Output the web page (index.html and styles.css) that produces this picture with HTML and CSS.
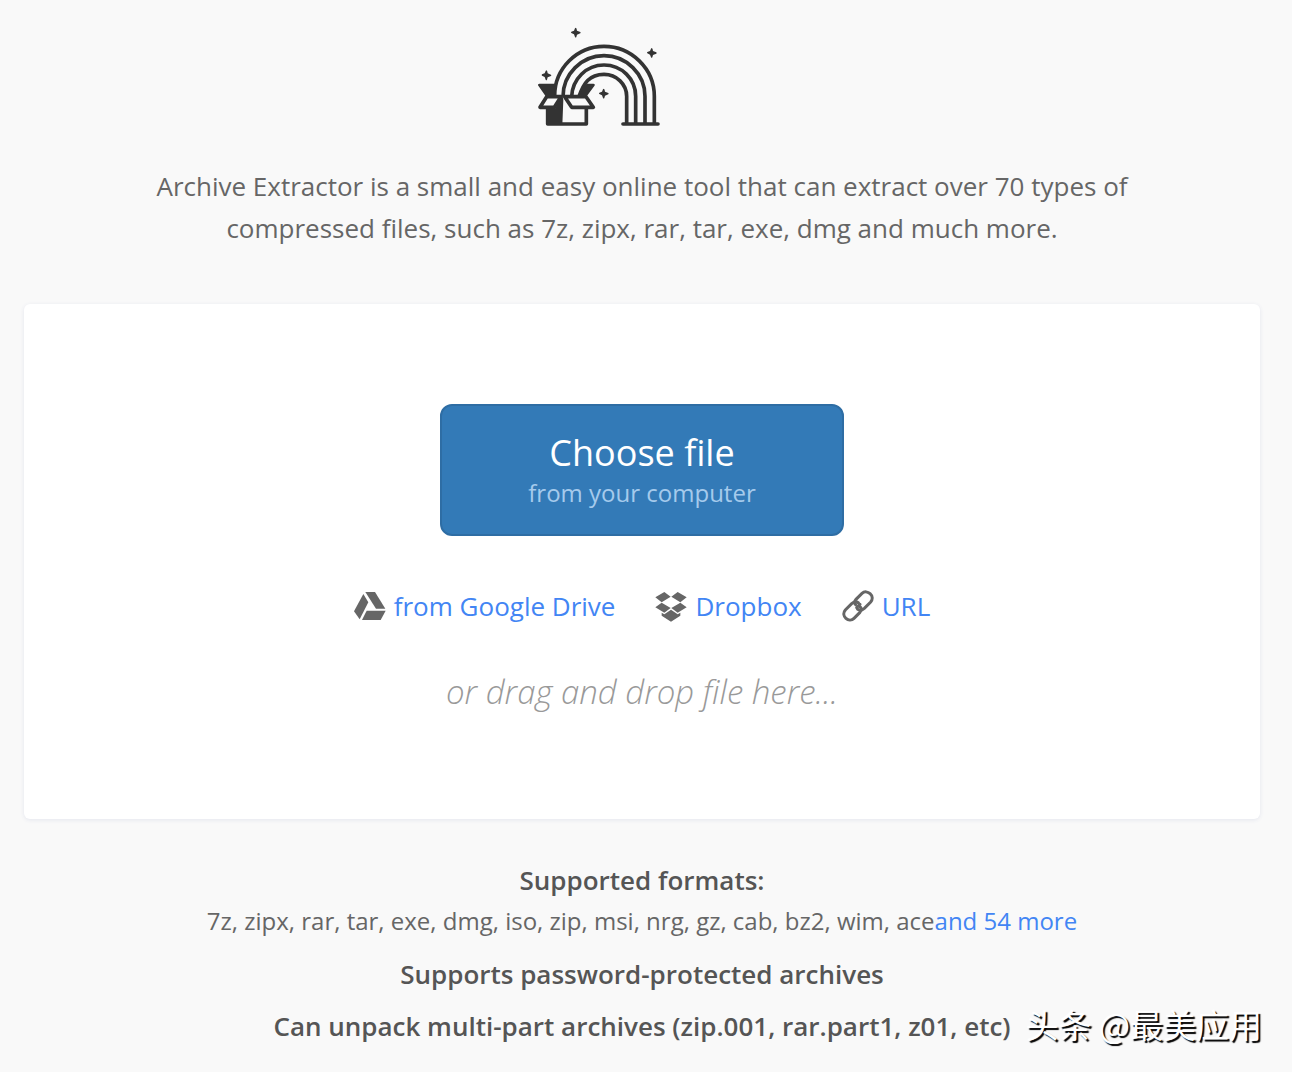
FILE: index.html
```html
<!DOCTYPE html>
<html lang="en">
<head>
<meta charset="utf-8">
<title>Archive Extractor</title>
<meta name="viewport" content="width=device-width, initial-scale=1">
<link rel="stylesheet" href="styles.css">
</head>
<body>
<header class="header">
  <svg class="logo" viewBox="0 0 480 375" role="img" aria-label="Archive Extractor">
    <g fill="none" stroke="#333" stroke-width="11">
      <path d="M104 242C104 160 171 94 252 94S403 160 403 244V327"/>
      <path d="M129 245C129 177 185 122 252 122S375 177 375 244V327"/>
      <path d="M155 245C157 192 199 150 252 150S347 192 347 244V327"/>
      <path d="M177 245C190 205 208 178 252 178C290 178 320 208 320 244V327"/>
      <path d="M309 327H414" stroke-linecap="round" stroke-width="11"/>
      <path d="M83 280V327H199V280" stroke-linejoin="round"/>
      <path d="M80 245H123L103 277H60ZM134 245H198L220 277H155Z" stroke-linejoin="round"/>
    </g>
    <g fill="#333">
      <path d="M58 206H105L102 245H78L54 211Q53 206 58 206ZM200 206H220Q227 207 223 213L199 245H176Q190 215 200 206Z"/>
      <path d="M122 250L128 245L130 254L127 330H80V280H106Z"/>
      <path id="spark" d="M167 38Q170 38 171 47L181 51Q183 53 181 55L171 59L169 66Q167 69 165 66L162 58L154 54Q152 52 154 50L162 47L165 40Q166 38 167 38Z"/>
      <use href="#spark" x="228" y="61"/>
      <use href="#spark" x="-88" y="128"/>
      <use href="#spark" x="84" y="183"/>
    </g>
  </svg>
</header>
<main class="content">
  <p class="intro">Archive Extractor is a small and easy online tool that can extract over 70 types of compressed files, such as 7z, zipx, rar, tar, exe, dmg and much more.</p>
  <section class="card">
    <button class="choose" type="button">
      <span class="choose-title">Choose file</span>
      <span class="choose-note">from your computer</span>
    </button>
    <nav class="sources" aria-label="Other sources">
      <a class="source" href="#drive"><svg class="icon" viewBox="0 0 96 96" aria-hidden="true"><g fill="#666"><path d="M28 12L43 37L17 88L0 64Z"/><path d="M34 6H63L94 56H66Z"/><path d="M38 62H95L80 90H24Z"/></g></svg>from Google Drive</a>
      <a class="source" href="#dropbox"><svg class="icon" viewBox="0 0 96 96" aria-hidden="true"><path fill="#666" d="M28 6L47 20L20 37L1 22ZM68 6L95 22L76 37L49 20ZM1 52L20 38L47 54L28 68ZM76 38L95 52L68 68L49 54ZM48 59L68 73L76 68V77L48 95L20 77V68L28 73Z"/></svg>Dropbox</a>
      <a class="source" href="#url"><svg class="icon" viewBox="0 0 96 96" aria-hidden="true"><g fill="none" stroke="#666" stroke-width="9" stroke-linecap="round"><path d="M41 44C36 39 37 34 42 28L60 10C75-4 101 18 86 36L67 55Q56 64 47 58"/><path d="M55 51C60 57 58 62 53 68L36 85C21 100-5 78 10 60L29 41Q40 32 49 38"/><path d="M44 53L54 43"/></g></svg>URL</a>
    </nav>
    <p class="drop">or drag and drop file here...</p>
  </section>
  <section class="details">
    <h2 class="feature">Supported formats:</h2>
    <p class="formats">7z, zipx, rar, tar, exe, dmg, iso, zip, msi, nrg, gz, cab, bz2, wim, ace<a href="#formats">and 54 more</a></p>
    <h2 class="feature">Supports password-protected archives</h2>
    <h2 class="feature">Can unpack multi-part archives (zip.001, rar.part1, z01, etc)</h2>
  </section>
</main>
<div class="watermark">头条 @最美应用</div>
</body>
</html>
```
FILE: styles.css
```css
* {
  box-sizing: border-box;
}

body {
  position: relative;
  margin: 0;
  padding: 15px 32px 16px 24px;
  background: #f9f9f9;
  color: #666;
  font-family: "Open Sans", "Noto Sans", sans-serif;
  font-size: 26px;
  line-height: 42px;
  text-align: center;
}

h2,
p {
  margin: 0;
}

a {
  color: #4285f4;
  text-decoration: none;
}

.header {
  display: flex;
  justify-content: center;
  padding-right: 84px;
}

.logo {
  width: 160px;
  height: 125px;
}

.intro {
  max-width: 1040px;
  margin: 25px auto 55px;
}

.card {
  display: flex;
  flex-direction: column;
  align-items: center;
  padding: 100px 24px 102px;
  background: #fff;
  border-radius: 6px;
  box-shadow: 0 1px 4px #e4e6ee;
}

.choose {
  display: flex;
  flex-direction: column;
  align-items: center;
  width: 404px;
  max-width: 100%;
  padding: 22px 16px 26px;
  border: 2px solid #2e6da4;
  border-radius: 12px;
  background: #337ab7;
  color: #fff;
  font: inherit;
  cursor: pointer;
}

.choose-title {
  font-size: 36px;
  line-height: 50px;
}

.choose-note {
  color: #a5caec;
  font-size: 24px;
  line-height: 30px;
}

.sources {
  display: flex;
  flex-wrap: wrap;
  justify-content: center;
  gap: 40px;
  margin-top: 49px;
}

.source {
  display: flex;
  align-items: center;
  gap: 8px;
}

.icon {
  width: 32px;
  height: 32px;
}

.drop {
  margin-top: 40px;
  color: #999;
  font-size: 33px;
  font-style: italic;
  font-weight: 300;
  line-height: 50px;
}

.details {
  margin-top: 40px;
}

.feature {
  margin-bottom: 10px;
  color: #555;
  font-size: 26px;
  font-weight: 600;
}

.formats {
  margin: -11px 0 11px;
  font-size: 24px;
}

.watermark {
  position: absolute;
  right: 30px;
  bottom: 27px;
  color: #fff;
  font-family: "Noto Sans CJK SC", sans-serif;
  font-size: 33px;
  line-height: 44px;
  text-shadow: 2px 2px 1px #000;
}
```
